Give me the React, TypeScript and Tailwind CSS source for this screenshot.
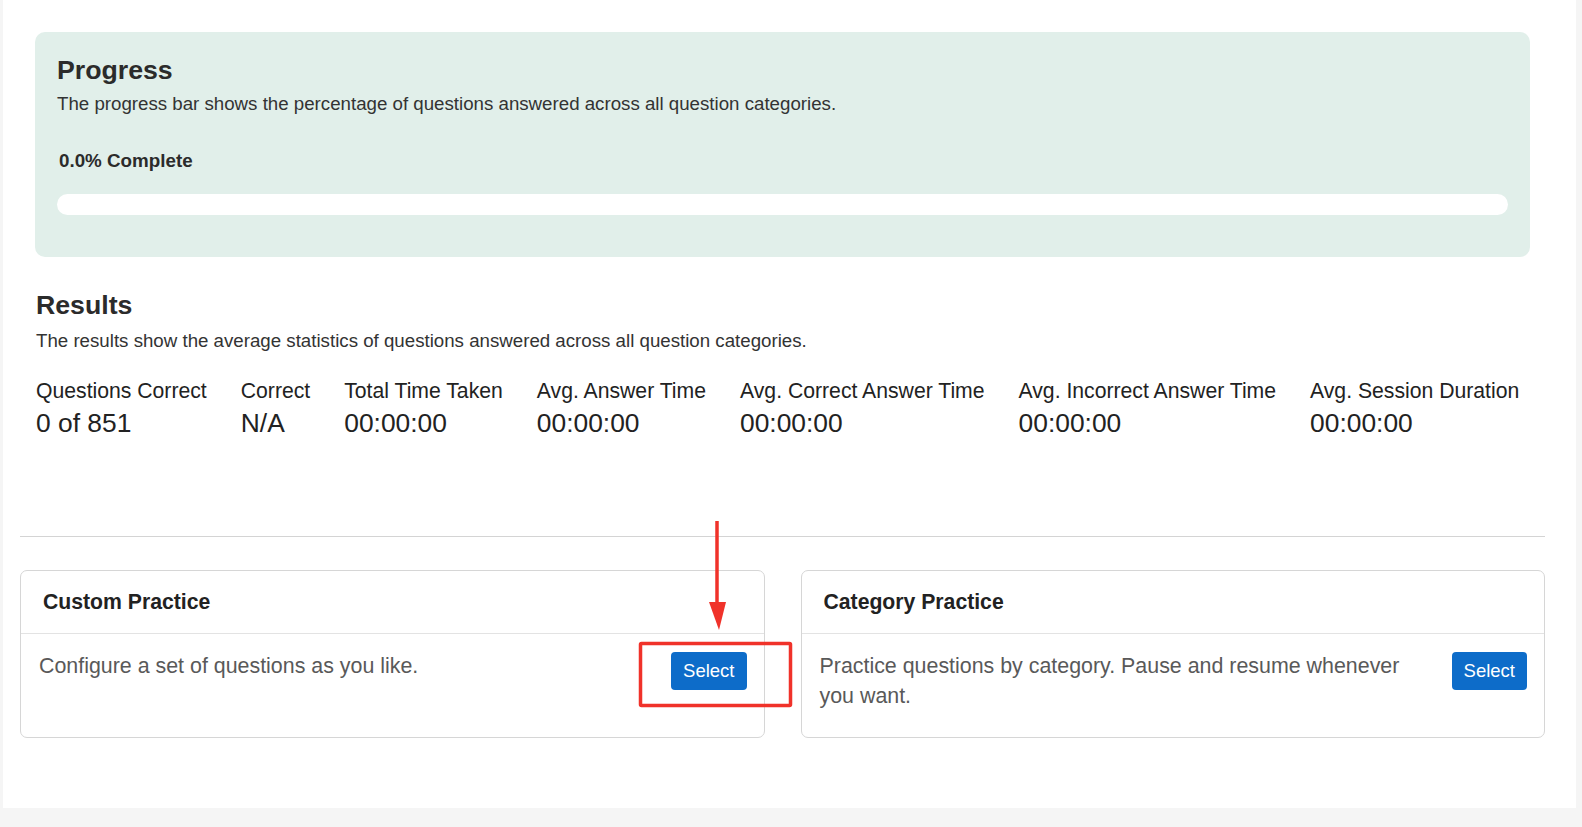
import React from 'react';

const stats = [
  { label: 'Questions Correct', value: '0 of 851' },
  { label: 'Correct', value: 'N/A' },
  { label: 'Total Time Taken', value: '00:00:00' },
  { label: 'Avg. Answer Time', value: '00:00:00' },
  { label: 'Avg. Correct Answer Time', value: '00:00:00' },
  { label: 'Avg. Incorrect Answer Time', value: '00:00:00' },
  { label: 'Avg. Session Duration', value: '00:00:00' },
];

const practices = [
  { title: 'Custom Practice', text: 'Configure a set of questions as you like.' },
  { title: 'Category Practice', text: 'Practice questions by category. Pause and resume whenever you want.' },
];

function PracticeCard({ title, text }: { title: string; text: string }) {
  return (
    <div className="bg-white border border-[#d6d6d6] rounded-[7px] flex flex-col">
      <div className="h-[63px] border-b border-[#e3e3e3] flex items-center pl-[22px] text-[21.2px] font-bold text-[#222]">
        {title}
      </div>
      <div className="flex items-start justify-between pl-[18px] pr-[17px] pt-[18px] pb-[26px] gap-6">
        <p className="text-[21.4px] leading-[30px] text-[#595959] -mt-[1px]">{text}</p>
        <button className="shrink-0 h-[38px] px-[12px] bg-[#0d6cc9] text-white text-[18.5px] rounded-[4px]">
          Select
        </button>
      </div>
    </div>
  );
}

export default function App() {
  return (
    <div className="min-h-[827px] bg-[#f5f5f5] font-['Liberation_Sans',Arial,sans-serif] text-[#333]">
      <div className="relative ml-[3px] w-[1573px] h-[808px] bg-white pl-[17px] pr-[31px] pt-[32px]">
        <div className="px-[15px]">
          <div className="bg-[#e1efea] rounded-[10px] px-[22px] pt-[23px] pb-[42px]">
            <h2 className="text-[26.7px] leading-[30px] font-bold text-[#2b2b2b]">Progress</h2>
            <p className="mt-[6px] text-[18.7px] leading-[25px]">
              The progress bar shows the percentage of questions answered across all question categories.
            </p>
            <div className="mt-[33px] pl-[2px] text-[18.8px] leading-[24px] font-bold text-[#2b2b2b]">0.0% Complete</div>
            <div className="mt-[21px] h-[21px] rounded-full bg-white" />
          </div>

          <h2 className="mt-[33px] pl-[1px] text-[26.7px] leading-[30px] font-bold text-[#2b2b2b]">Results</h2>
          <p className="mt-[8px] pl-[1px] text-[18.7px] leading-[25px]">
            The results show the average statistics of questions answered across all question categories.
          </p>
          <div className="mt-[26px] pl-[1px] flex gap-[34px]">
            {stats.map((s) => (
              <div key={s.label}>
                <div className="text-[21.2px] leading-[24px] text-[#222]">{s.label}</div>
                <div className="mt-[5px] text-[26.4px] leading-[30px] text-[#222]">{s.value}</div>
              </div>
            ))}
          </div>
        </div>

        <div className="mt-[98px] h-px bg-[#d4d4d4]" />

        <div className="mt-[33px] grid grid-cols-2 gap-[36px]">
          {practices.map((p) => (
            <PracticeCard key={p.title} {...p} />
          ))}
        </div>

        <svg className="absolute left-0 top-0 pointer-events-none" width="1573" height="808">
          <line x1="714" y1="521" x2="714" y2="604" stroke="#f0322a" strokeWidth="3.5" />
          <polygon points="706,602 723,602 716,630" fill="#f0322a" />
          <rect x="637.5" y="643.5" width="150" height="62" fill="none" stroke="#f0322a" strokeWidth="3.5" rx="1" />
        </svg>
      </div>
    </div>
  );
}
